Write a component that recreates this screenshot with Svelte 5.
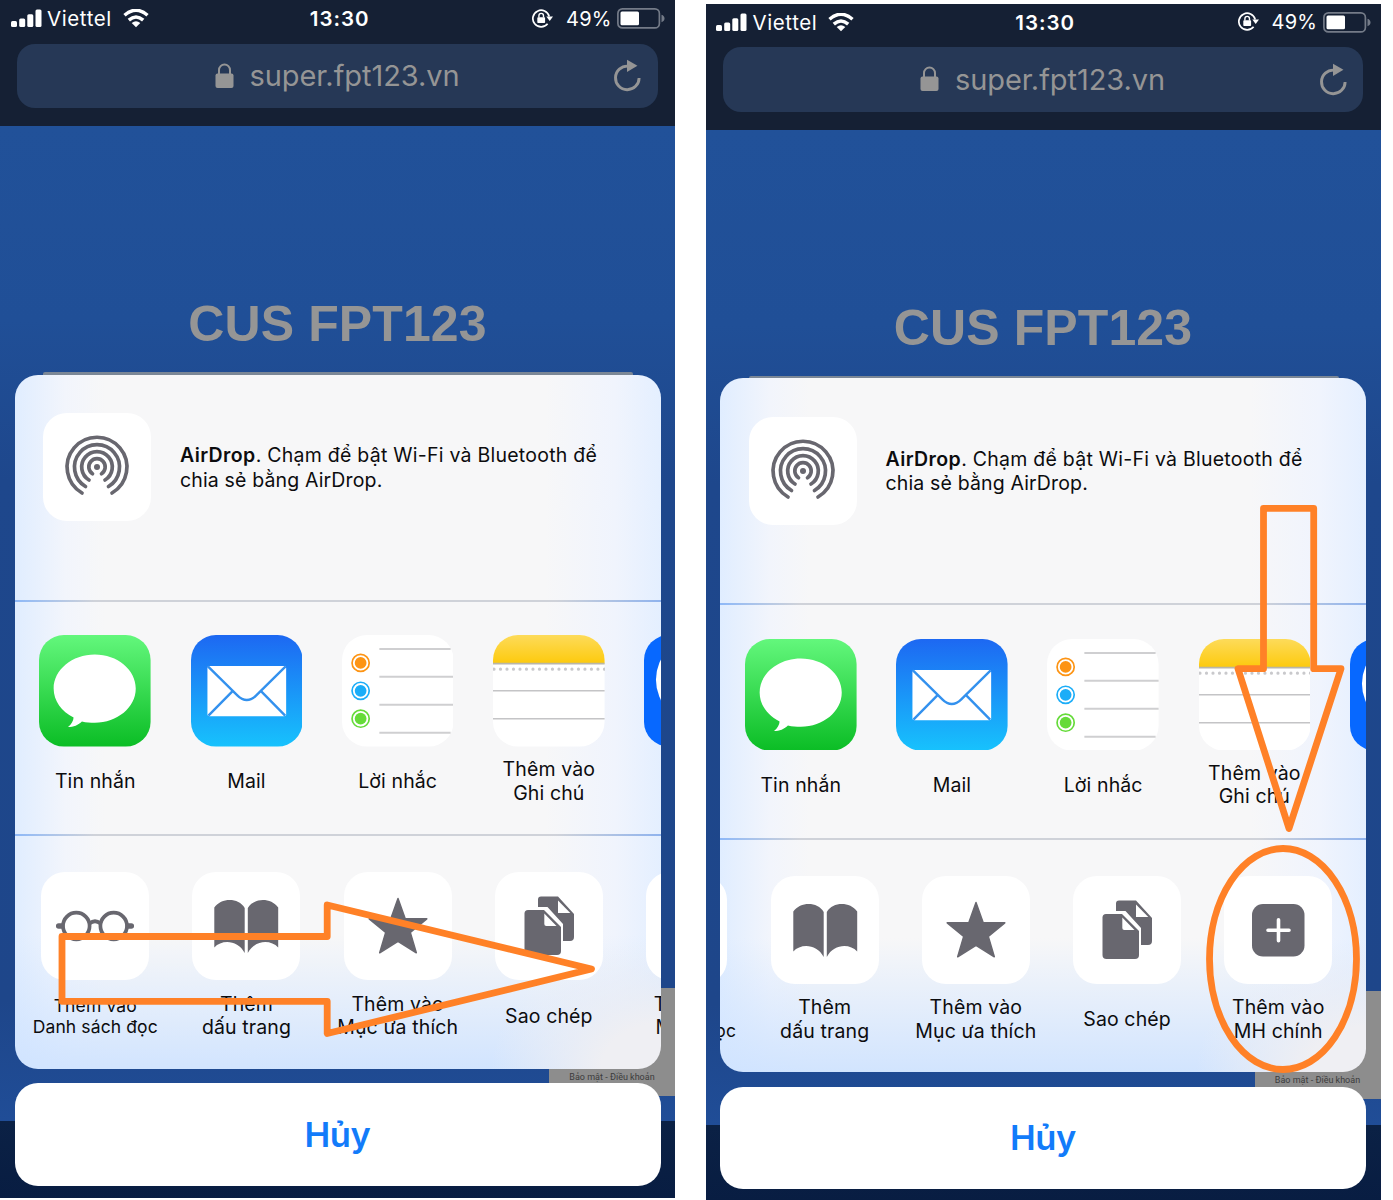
<script>
  const apps = [
    { icon: 'messages', label: 'Tin nhắn' },
    { icon: 'mail', label: 'Mail' },
    { icon: 'reminders', label: 'Lời nhắc' },
    { icon: 'notes', label: 'Thêm vào\nGhi chú' },
    { icon: 'messenger', label: '' }
  ];
  const actions = [
    { icon: 'glasses', label: 'Thêm vào\nDanh sách đọc', small: true },
    { icon: 'book', label: 'Thêm\ndấu trang' },
    { icon: 'star', label: 'Thêm vào\nMục ưa thích' },
    { icon: 'copy', label: 'Sao chép' },
    { icon: 'plus', label: 'Thêm vào\nMH chính' }
  ];
  const reminderRows = [
    { y: 28, color: '#fd9414' },
    { y: 56, color: '#1badf8' },
    { y: 84, color: '#65db39' }
  ];
</script>

{#snippet appIcon(name)}
  <svg class="app-icon" viewBox="0 0 112 112">
    {#if name === 'messages'}
      <rect width="112" height="112" rx="25" fill="url(#g-green)" />
      <path fill="#fff" d="M56 19.500c22.700 0 41.100 15.300 41.100 34.200S78.700 88 56 88c-4.500 0-8.800-.2-12.900-1.300-3.500 3.500-8.600 5.700-14 5.700 3.300-2.700 5.500-6.300 5.600-9.700C22.700 76.900 14.700 66.100 14.700 53.700 14.700 34.800 33.300 19.500 56 19.500z" />
    {:else if name === 'mail'}
      <rect width="112" height="112" rx="25" fill="url(#g-mail)" />
      <rect x="16.500" y="31" width="79" height="50.500" rx="2" fill="#fff" />
      <path fill="none" stroke="#3391ee" stroke-width="2.400" d="M17 31.500 46.500 60.500q9.500 9.500 19 0L95 31.500M17.500 81 41.500 56.500M94.500 81 70.500 56.500" />
    {:else if name === 'reminders'}
      <rect width="112" height="112" rx="25" fill="#fff" />
      {#each reminderRows as r}
        <circle cx="18.700" cy={r.y} r="8.600" fill="none" stroke={r.color} stroke-width="1.700" />
        <circle cx="18.700" cy={r.y} r="5.900" fill={r.color} />
      {/each}
      <path stroke="#cfcfd1" stroke-width="2" d="M37.500 14H109M37.500 42H112M37.500 70H112M37.500 98H109" />
    {:else if name === 'notes'}
      <rect width="112" height="112" rx="25" fill="#fff" />
      <path fill="url(#g-notes)" d="M0 28.500V25A25 25 0 0 1 25 0H87A25 25 0 0 1 112 25V28.500z" />
      <path stroke="#b9b6a8" stroke-width="1.600" d="M0 28.700H112" />
      <path stroke="#c4c4c6" stroke-width="1.600" d="M0 56H112M0 84H112" />
      <path stroke="#c9c9cc" stroke-width="3.200" stroke-linecap="round" stroke-dasharray="0 6.520" d="M1 34.300H112" />
    {:else}
      <rect width="112" height="112" rx="25" fill="#0768ff" />
      <ellipse cx="56" cy="45" rx="44" ry="44" fill="#fff" />
    {/if}
  </svg>
{/snippet}

{#snippet actionIcon(name)}
  <svg class="action-icon" viewBox="0 0 108 108">
    {#if name === 'glasses'}
      <g fill="none" stroke="#68676f" stroke-width="3.700">
        <circle cx="35.300" cy="54" r="13.300" />
        <circle cx="72.700" cy="54" r="13.300" />
        <path d="M48.500 51.500q5.500-4.500 11 0" />
        <path stroke-width="5.500" stroke-linecap="round" d="M17.700 54h3M87.300 54h3" />
      </g>
    {:else if name === 'book'}
      <path fill="#68676f" d="M22.300 35.500C29.500 25.500 46.500 25.500 52.700 36V81C46 68 30 67 22.300 75.500zM86.200 35.500C79 25.500 62 25.500 55.800 36V81C62.500 68 78.500 67 86.200 75.500z" />
    {:else if name === 'star'}
      <path fill="#68676f" stroke="#68676f" stroke-width="1.500" stroke-linejoin="round" d="M54 26.500 61.200 46.800H82.800L66.300 60.500 72.300 80.800 54 69.300 35.700 80.800 41.700 60.500 25.200 46.800H46.800z" />
    {:else if name === 'copy'}
      <path fill="#68676f" d="M46 24.500H63L79 42V65a4 4 0 0 1-4 4H68V52L52.500 35H43V27.500A3 3 0 0 1 46 24.500z" />
      <path fill="#fff" d="M63 28.500 75.300 41H63z" />
      <path fill="#68676f" d="M33 38H49L66 55V79a4 4 0 0 1-4 4H33.500A4 4 0 0 1 29.500 79V41.500A3.500 3.500 0 0 1 33 38z" />
      <path fill="#fff" d="M49.300 41.500 61.500 54H51.300a2 2 0 0 1-2-2z" />
    {:else}
      <rect x="28" y="28" width="52.500" height="52.500" rx="11" fill="#68676f" />
      <path stroke="#fff" stroke-width="3.600" stroke-linecap="round" d="M44 54.300H65M54.500 43.800V64.800" />
    {/if}
  </svg>
{/snippet}

{#snippet phone(kind)}
  <section class="phone {kind}">
    <div class="captcha">Bảo mật - Điều khoản</div>
    <header class="status">
      <div class="carrier">
        <svg width="31" height="19" viewBox="0 0 31 19" fill="#fff">
          <rect x="0" y="12" width="6" height="6" rx="1.500" /><rect x="8.200" y="9.500" width="6" height="8.500" rx="1.500" /><rect x="16.300" y="5.300" width="6" height="12.700" rx="1.500" /><rect x="24.500" y=".5" width="6" height="17.500" rx="1.500" />
        </svg>
        <span class="name">Viettel</span>
        <svg width="26" height="19" viewBox="0 0 26 19">
          <g fill="none" stroke="#fff" stroke-width="3.500"><path d="M1.500 6.300Q13-3.700 24.500 6.300" /><path d="M5.800 11.100Q13 4.900 20.200 11.100" /></g>
          <path fill="#fff" d="M8.700 14Q13 10.300 17.300 14L13 18.200z" />
        </svg>
      </div>
      <time>13:30</time>
      <div class="power">
        <svg width="21" height="20" viewBox="0 0 21 20">
          <path fill="none" stroke="#fff" stroke-width="1.700" d="M17.200 7.500A8.300 8.300 0 1 0 15.600 14.800" />
          <path fill="#fff" d="M14.300 7.500H21L17.700 12z" />
          <rect x="5.300" y="8.200" width="7.800" height="5.800" rx=".8" fill="#fff" />
          <path fill="none" stroke="#fff" stroke-width="1.400" d="M6.900 8.500V6.700a2.300 2.300 0 0 1 4.600 0V8.500" />
        </svg>
        <span class="percent">49%</span>
        <svg width="48" height="21" viewBox="0 0 48 21">
          <rect x=".9" y=".9" width="41.500" height="19" rx="4.500" fill="none" stroke="#747b88" stroke-width="1.700" />
          <rect x="3.500" y="3.500" width="18.500" height="13.800" rx="1.500" fill="#fff" />
          <path fill="#747b88" d="M44.500 6.800q3 1 3 3.700t-3 3.700z" />
        </svg>
      </div>
    </header>
    <div class="address">
      <svg class="lock" width="19" height="26" viewBox="0 0 19 26">
        <rect x=".5" y="10.500" width="18" height="14.500" rx="2" fill="#959595" />
        <path fill="none" stroke="#959595" stroke-width="2" d="M4 11.500V7A5.500 5.500 0 0 1 15 7V11.500" />
      </svg>
      <span>super.fpt123.vn</span>
      <svg class="reload" width="29" height="33" viewBox="0 0 30 34">
        <path fill="none" stroke="#959595" stroke-width="3" d="M15.500 7.300A12.200 12.200 0 1 0 27 19.500" />
        <path fill="#959595" d="M14.500.8 25.300 7 14.500 13.400z" />
      </svg>
    </div>
    <h1>CUS FPT123</h1>
    <div class="field"></div>
    <div class="sheet">
      <div class="airdrop">
        <div class="tile">
          <svg viewBox="0 0 108 108" fill="none" stroke="#68676f" stroke-width="3.700" stroke-linecap="round">
            <circle cx="54" cy="54" r="3" fill="#68676f" stroke="none" />
            <path d="M49.500 60.700A8.200 8.200 0 1 1 58.500 60.700" />
            <path d="M46 67A15.300 15.300 0 1 1 62 67" />
            <path d="M42.500 73.500A22.500 22.500 0 1 1 65.500 73.500" />
            <path d="M39 80A29.900 29.900 0 1 1 69 80" />
          </svg>
        </div>
        <p><b>AirDrop</b>. Chạm để bật Wi-Fi và Bluetooth để<br /><span class="line2">chia sẻ bằng AirDrop.</span></p>
      </div>
      <div class="row apps">
        {#each apps as a}
          <div class="item">{@render appIcon(a.icon)}<span class="label">{a.label}</span></div>
        {/each}
      </div>
      <div class="row actions">
        {#each actions as a}
          <div class="item"><div class="tile">{@render actionIcon(a.icon)}</div><span class="label" class:small={a.small}>{a.label}</span></div>
        {/each}
      </div>
    </div>
    <button>Hủy</button>
  </section>
{/snippet}

<svg class="defs" width="0" height="0">
  <linearGradient id="g-green" x2="0" y2="1"><stop stop-color="#63f77c" /><stop offset="1" stop-color="#0bbd25" /></linearGradient>
  <linearGradient id="g-mail" x2="0" y2="1"><stop stop-color="#1d68f2" /><stop offset="1" stop-color="#17c2fd" /></linearGradient>
  <linearGradient id="g-notes" x2="0" y2="1"><stop stop-color="#fddb5a" /><stop offset="1" stop-color="#fdca0d" /></linearGradient>
</svg>
<main>
  {@render phone('first')}
  {@render phone('second')}
  <svg class="marks" width="1393" height="1200" fill="none" stroke="#ff8127" stroke-width="6.800" stroke-linejoin="round">
    <path d="M62 936.500H327.200V905L591.500 969 327.200 1033.500V1001.300H62z" />
    <path d="M1263.500 508.300H1313.700V668.700H1341L1289 828.500 1238 668.700H1263.500z" />
    <ellipse cx="1283" cy="959" rx="73.500" ry="110.500" />
  </svg>
</main>

<style>
  :global(body) { margin: 0; background: #fff; }
  .defs { position: absolute; }
  main {
    position: relative;
    display: flex;
    gap: 30.500px;
    width: 1393px;
    height: 1200px;
    overflow: hidden;
    font-family: Inter, "Noto Sans", sans-serif;
  }
  .marks { position: absolute; inset: 0; }
  .phone {
    position: relative;
    flex: none;
    box-sizing: border-box;
    width: 675px;
    height: 1198.300px;
    overflow: hidden;
    display: flex;
    flex-direction: column;
    background: linear-gradient(#152034 125.800px, #215199 125.800px, #204f97 320px, #1e478c 480px, #1e468a 1000px, #204d97 1121px, #0b2145 1121px, #081d42);
  }
  .second { margin-top: 3.500px; }
  .second .actions .item:first-child { margin-left: -127.300px; }
  .status {
    height: 37px;
    flex: none;
    padding: 0 10px 0 10.500px;
    display: grid;
    grid-template-columns: 1fr auto 1fr;
    align-items: center;
    color: #fff;
    font-size: 20px;
  }
  .carrier, .power { display: flex; align-items: center; }
  .name { margin: 0 11px 0 5.500px; font-size: 20.500px; letter-spacing: .6px; }
  .power { justify-content: flex-end; }
  .percent { margin: 0 5.200px 0 12.500px; letter-spacing: .3px; }
  time { font-weight: 600; font-size: 20.500px; letter-spacing: 1px; padding-left: 4px; }
  .address {
    flex: none;
    margin: 6.500px 17.500px 0 17px;
    height: 64.500px;
    border-radius: 18px;
    background: #263856;
    color: #959595;
    display: flex;
    align-items: center;
    font-size: 29px;
    letter-spacing: -.07px;
  }
  .lock { margin: 0 16px 0 197.500px; }
  .reload { margin: 0 15.500px 0 auto; }
  h1 {
    margin: 188.200px 0 0;
    height: 56px;
    text-align: center;
    color: #959595;
    font: bold 50px/56px "Liberation Sans", sans-serif;
    letter-spacing: .1px;
  }
  .field { height: 2.500px; margin: 20px 42px 0 43px; background: #7b8796; border-radius: 2px 2px 0 0; flex: none; }
  .sheet {
    position: relative;
    flex: none;
    width: 646px;
    height: 694px;
    margin-left: 14.500px;
    margin-top: -.200px;
    border-radius: 23px;
    overflow: hidden;
    color: #0c0c0e;
    background:
      radial-gradient(ellipse 170px 130px at 100% 100%, #efeff3 35%, #efeff300),
      linear-gradient(#cfe3ff00 560px, #cfe3ffee 100%),
      linear-gradient(90deg, #e0edff, #f2f5fc 50px, #f7f7f8 90px, #f7f7f8 530px, #f0f4fd 600px, #e4efff);
  }
  .airdrop { box-sizing: border-box; height: 225px; padding: 38.500px 0 0 28.500px; display: flex; gap: 29px; }
  .tile { width: 108px; height: 108px; border-radius: 24px; background: #fff; }
  .tile svg { display: block; width: 108px; height: 108px; }
  p { margin: 30.300px 0 0; font-size: 19.500px; line-height: 24.500px; letter-spacing: .25px; white-space: nowrap; }
  .line2 { letter-spacing: .15px; }
  b { font-weight: 600; letter-spacing: .4px; }
  .row {
    box-sizing: border-box;
    display: flex;
    padding-left: 5.200px;
    border-top: 2px solid;
    border-image: linear-gradient(90deg, #8db8f8, #cfd2d9 80px, #cfd2d9 540px, #8fb3ee) 1;
  }
  .apps { height: 234.500px; padding-top: 33.700px; }
  .actions { height: 234px; padding-top: 36px; }
  .item { width: 151.200px; flex: none; display: flex; flex-direction: column; align-items: center; }
  .app-icon { width: 111.600px; height: 111.600px; }
  .label {
    height: 46.500px;
    display: flex;
    align-items: center;
    text-align: center;
    white-space: pre;
    font-size: 19.500px;
    line-height: 23.200px;
    letter-spacing: .12px;
  }
  .apps .label { margin-top: 11.600px; }
  .actions .label { margin-top: 12.900px; }
  .label.small { font-size: 17.500px; line-height: 21px; }
  button {
    position: relative;
    flex: none;
    width: 646px;
    height: 102.500px;
    margin: 14.500px 0 0 14.500px;
    padding: 0;
    border: 0;
    border-radius: 23px;
    background: #fff;
    color: #127bfa;
    font: 600 34.500px Inter, "Noto Sans", sans-serif;
    letter-spacing: -.4px;
  }
  .captcha {
    position: absolute;
    right: 0;
    top: 987.500px;
    width: 126px;
    height: 108px;
    box-sizing: border-box;
    padding-top: 83px;
    text-align: center;
    background: #8d8d8d;
    color: #3c3c3c;
    font: 9px/12px Roboto, sans-serif;
  }
</style>
